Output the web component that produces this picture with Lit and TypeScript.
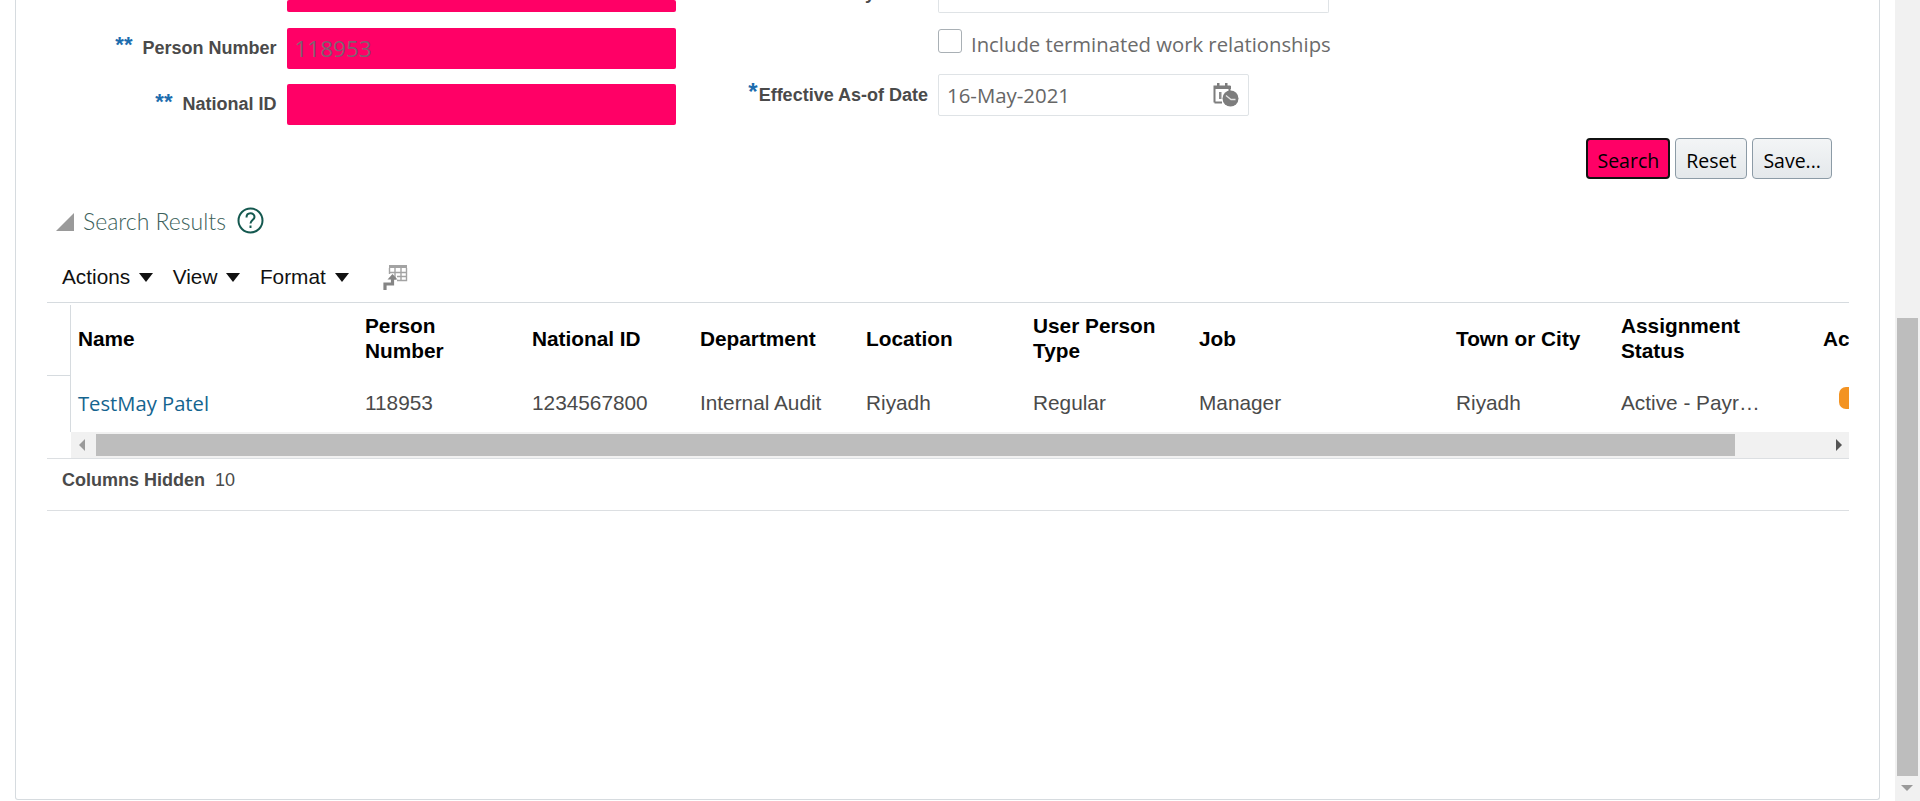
import { LitElement, html, css } from 'lit';
import { customElement } from 'lit/decorators.js';

type Column = { label: unknown; value: string; width: number };

const columns: Column[] = [
  { label: 'Name', value: 'TestMay Patel', width: 287 },
  { label: html`Person<br />Number`, value: '118953', width: 167 },
  { label: 'National ID', value: '1234567800', width: 168 },
  { label: 'Department', value: 'Internal Audit', width: 166 },
  { label: 'Location', value: 'Riyadh', width: 167 },
  { label: html`User Person<br />Type`, value: 'Regular', width: 166 },
  { label: 'Job', value: 'Manager', width: 257 },
  { label: 'Town or City', value: 'Riyadh', width: 165 },
  { label: html`Assignment<br />Status`, value: 'Active - Payroll Eligible', width: 202 },
];

@customElement('app-root')
export class AppRoot extends LitElement {
  private calendarIcon() {
    return html`<svg class="cal" width="26" height="25" viewBox="0 0 26 25">
      <path d="M1.5 20.5V4.5h15V9M1.5 20.5H9" fill="none" stroke="#7d7d7d" stroke-width="2" />
      <path d="M1 4h17v3H1z" fill="#7d7d7d" />
      <rect x="4" y="1" width="2.5" height="4" fill="#7d7d7d" />
      <rect x="12" y="1" width="2.5" height="4" fill="#7d7d7d" />
      <rect x="6" y="10" width="2.5" height="7" fill="#8d8d8d" />
      <circle cx="17.5" cy="16.5" r="8" fill="#7d7d7d" />
      <path d="M13 13.5l5 4h4.5" fill="none" stroke="#e4e4e4" stroke-width="1.3" />
    </svg>`;
  }

  private tableIcon() {
    return html`<svg width="25" height="27" viewBox="0 0 25 27" fill="none">
      <path d="M6 1h18v3H6z" fill="#a3a3a3" />
      <path d="M6.5 4v6M12 4v12M18 4v12M23.5 4v12.5H14M6.5 8.5h17M14 12.5h9.5" stroke="#a3a3a3" stroke-width="1.4" />
      <path d="M2 26v-6h7.5v-5" stroke="#858585" stroke-width="3.2" />
      <path d="M4.5 15.5L9.5 10l5 5.5z" fill="#858585" />
    </svg>`;
  }

  override render() {
    return html`
      <div class="page">
        <div class="panel">
          <div class="form">
            <div class="col left">
              <div class="field clipped"><span class="input pink"></span></div>
              <div class="field">
                <label><span class="req">**</span>Person Number</label>
                <span class="input pink"><span class="dim">118953</span></span>
              </div>
              <div class="field">
                <label><span class="req">**</span>National ID</label>
                <span class="input pink"></span>
              </div>
            </div>
            <div class="col right">
              <div class="field clipped start">
                <label class="cut"><span>Keywords</span></label>
                <span class="input plain wide"></span>
              </div>
              <div class="check">
                <span class="box"></span>
                <span>Include terminated work relationships</span>
              </div>
              <div class="field date">
                <label><span class="req one">*</span>Effective As-of Date</label>
                <span class="input plain short">16-May-2021 ${this.calendarIcon()}</span>
              </div>
            </div>
          </div>

          <div class="buttons">
            <button class="primary">Search</button>
            <button>Reset</button>
            <button>Save...</button>
          </div>

          <div class="results-head">
            <svg width="18" height="18" viewBox="0 0 18 18"><path d="M0 18L18 0v18z" fill="#9a9a9a" /></svg>
            <span class="title">Search Results</span>
            <svg width="27" height="27" viewBox="0 0 27 27" fill="none" stroke="#14584f" stroke-width="2">
              <circle cx="13.5" cy="13.5" r="12" />
              <path d="M9.5 10.5c0-5.5 8-5.5 8-.5 0 3-4 3.2-4 6.5" />
              <path d="M13.5 18.5v2.5" />
            </svg>
          </div>

          <div class="toolbar">
            <span class="menu">Actions<i></i></span>
            <span class="menu">View<i></i></span>
            <span class="menu">Format<i></i></span>
            <span class="tool">${this.tableIcon()}</span>
          </div>

          <div class="table">
            <div class="gutter"><div class="gutter-head"></div></div>
            <div class="cols">
              <div class="row head">
                ${columns.map(c => html`<div class="cell" style="width:${c.width}px">${c.label}</div>`)}
                <div class="cell" style="width:120px">Actions</div>
              </div>
              <div class="row body">
                ${columns.map(
                  (c, i) => html`<div class="cell" style="width:${c.width}px">
                    ${i === 0
                      ? html`<a class="link">${c.value}</a>`
                      : html`<span class="txt">${c.value}</span>`}
                  </div>`
                )}
                <div class="cell" style="width:120px"><span class="pill"></span></div>
              </div>
            </div>
          </div>

          <div class="hscroll">
            <span class="arrow-l"></span>
            <span class="hthumb"></span>
            <span class="arrow-r"></span>
          </div>

          <div class="footer"><b>Columns Hidden</b><span>10</span></div>
        </div>
      </div>
      <div class="vscroll">
        <span class="vthumb"></span>
        <span class="arrow-d"></span>
      </div>
    `;
  }

  static override styles = css`
    :host {
      display: flex;
      width: 1920px;
      height: 801px;
      overflow: hidden;
      background: #fff;
      font-family: 'Liberation Sans', Arial, sans-serif;
      color: #4a4a4a;
    }

    .page {
      flex: 1;
      min-width: 0;
      padding-left: 15px;
      padding-right: 15px;
    }

    .panel {
      height: 800px;
      box-sizing: border-box;
      border: 1px solid #d6dbdf;
      border-top: none;
      border-radius: 0 0 3px 3px;
      padding: 0 30px 0 31px;
    }

    /* --- Form --- */

    .form {
      display: flex;
    }

    .col {
      display: flex;
      flex-direction: column;
    }

    .col.left {
      width: 629px;
      gap: 15.5px;
    }

    .col.right {
      margin-left: 44px;
    }

    .field {
      display: flex;
      justify-content: flex-end;
      gap: 10px;
      height: 41px;
    }

    .field.clipped {
      height: 12px;
    }

    .field.start {
      justify-content: flex-start;
    }

    .field.start label {
      width: 208px;
      justify-content: flex-end;
    }

    label {
      font-size: 18px;
      font-weight: 700;
      color: #4a4a4a;
      white-space: nowrap;
      display: flex;
      align-items: center;
    }

    .req {
      color: #1c6cae;
      font-size: 22px;
      margin-right: 10px;
      position: relative;
      top: -3px;
    }

    .req.one {
      font-size: 24px;
      margin-right: 1px;
      top: -4px;
    }

    .input {
      display: flex;
      align-items: center;
      box-sizing: border-box;
      border-radius: 2px;
      font-family: 'Open Sans', sans-serif;
      font-size: 20.4px;
      padding-left: 8px;
      color: #666;
    }

    .pink {
      width: 389.5px;
      background: #ff0066;
    }

    .dim {
      color: #7f6170;
      font-size: 22.5px;
      margin-top: 1px;
    }

    .plain {
      background: #fff;
      border: 1px solid #dfe3e6;
    }

    .wide {
      width: 391px;
      height: 13px;
      border-top: none;
      border-radius: 0 0 2px 2px;
    }

    .short {
      width: 311px;
      height: 42px;
    }

    .cal {
      margin-left: auto;
      margin-right: 9px;
      margin-top: -2px;
    }

    .cut {
      height: 3px;
      overflow: hidden;
      align-items: flex-start;
      line-height: 16px;
    }

    .cut span {
      display: block;
      margin-top: -15.5px;
    }

    .check {
      display: flex;
      align-items: center;
      gap: 9px;
      height: 26px;
      margin-top: 16px;
      margin-left: 218px;
      font-family: 'Open Sans', sans-serif;
      font-size: 20.3px;
      color: #6b6b6b;
      white-space: nowrap;
    }

    .check span:last-child {
      margin-top: 5px;
    }

    .box {
      width: 24px;
      height: 24px;
      box-sizing: border-box;
      background: #fff;
      border: 1px solid #a9b0b5;
      border-radius: 3px;
    }

    .field.date {
      margin-top: 20px;
      height: 42px;
      justify-content: flex-start;
    }

    .field.date label {
      width: 208px;
      justify-content: flex-end;
      padding-top: 1px;
      box-sizing: border-box;
    }

    /* --- Buttons --- */

    .buttons {
      display: flex;
      justify-content: flex-end;
      gap: 5px;
      margin-top: 13px;
      padding-right: 17px;
    }

    button {
      height: 41px;
      padding: 3px 10px 0;
      font-family: 'Open Sans', sans-serif;
      font-size: 19.5px;
      color: #000;
      border: 1px solid #8c9ba6;
      border-radius: 4px;
      background: linear-gradient(#f3f5f6, #e4e8eb);
    }

    button.primary {
      padding: 3px 9px 0;
      background: #ff0066;
      border: 2px solid #111;
    }

    /* --- Results --- */

    .results-head {
      display: flex;
      align-items: center;
      height: 27px;
      margin-top: 28px;
      margin-left: 9px;
    }

    .results-head svg:first-child {
      margin-top: 3px;
    }

    .title {
      font-family: 'Lato', sans-serif;
      font-weight: 300;
      font-size: 23px;
      color: #3c5f5b;
      margin: 0 11px 0 9px;
    }

    .toolbar {
      display: flex;
      align-items: center;
      height: 50px;
      padding-top: 1px;
      margin-top: 17px;
      padding-left: 15px;
      border-bottom: 1px solid #d6dbdf;
      font-size: 20.8px;
      color: #111;
    }

    .menu {
      display: flex;
      align-items: center;
      margin-right: 19.5px;
    }

    .menu i {
      width: 0;
      height: 0;
      margin-left: 9px;
      border-left: 7px solid transparent;
      border-right: 7px solid transparent;
      border-top: 9px solid #111;
    }

    .tool {
      display: flex;
      margin-left: 15px;
    }

    .table {
      display: flex;
      height: 129px;
    }

    .gutter {
      width: 23px;
      box-sizing: border-box;
      flex: none;
    }

    .gutter-head {
      height: 72px;
      border-bottom: 1px solid #d6dbdf;
    }

    .cols {
      flex: 1;
      min-width: 0;
      overflow: hidden;
      border-left: 1px solid #d6dbdf;
      margin-top: 2px;
    }

    .row {
      display: flex;
      white-space: nowrap;
    }

    .row.head {
      height: 69px;
      box-sizing: border-box;
      padding-bottom: 3px;
      align-items: center;
      font-size: 20.8px;
      font-weight: 700;
      color: #000;
      line-height: 25px;
    }

    .row.body {
      height: 58px;
      align-items: center;
      font-size: 20.8px;
      color: #4a4a4a;
    }

    .cell {
      flex: none;
      box-sizing: border-box;
      padding-left: 7px;
    }

    .txt {
      display: block;
      max-width: 142px;
      overflow: hidden;
      text-overflow: ellipsis;
    }

    .link {
      font-family: 'Open Sans', sans-serif;
      font-size: 20.2px;
      color: #14648f;
    }

    .pill {
      display: block;
      width: 60px;
      height: 22px;
      margin-left: 16px;
      margin-top: -10px;
      border-radius: 7px;
      background: #f39322;
    }

    .hscroll {
      display: flex;
      align-items: center;
      height: 26px;
      margin-left: 24px;
      background: #f1f1f1;
      position: relative;
    }

    .hthumb {
      width: 1639px;
      height: 22px;
      margin-left: 25px;
      background: #bdbdbd;
    }

    .arrow-l,
    .arrow-r {
      position: absolute;
      top: 7px;
      width: 0;
      height: 0;
      border-top: 6px solid transparent;
      border-bottom: 6px solid transparent;
    }

    .arrow-l {
      left: 8px;
      border-right: 6px solid #9a9a9a;
    }

    .arrow-r {
      right: 7px;
      border-left: 6px solid #555;
    }

    .footer {
      display: flex;
      align-items: center;
      gap: 10px;
      height: 43px;
      padding-bottom: 8px;
      border-top: 1px solid #dcdfe2;
      border-bottom: 1px solid #dcdfe2;
      padding-left: 15px;
      font-size: 18px;
    }

    /* --- Page scrollbar --- */

    .vscroll {
      width: 25px;
      flex: none;
      height: 801px;
      background: #f1f1f1;
      position: relative;
    }

    .vthumb {
      display: block;
      width: 21px;
      height: 458px;
      margin: 318px 0 0 2px;
      background: #bdbdbd;
    }

    .arrow-d {
      position: absolute;
      left: 6px;
      top: 785px;
      width: 0;
      height: 0;
      border-left: 6px solid transparent;
      border-right: 6px solid transparent;
      border-top: 6px solid #9a9a9a;
    }
  `;
}
